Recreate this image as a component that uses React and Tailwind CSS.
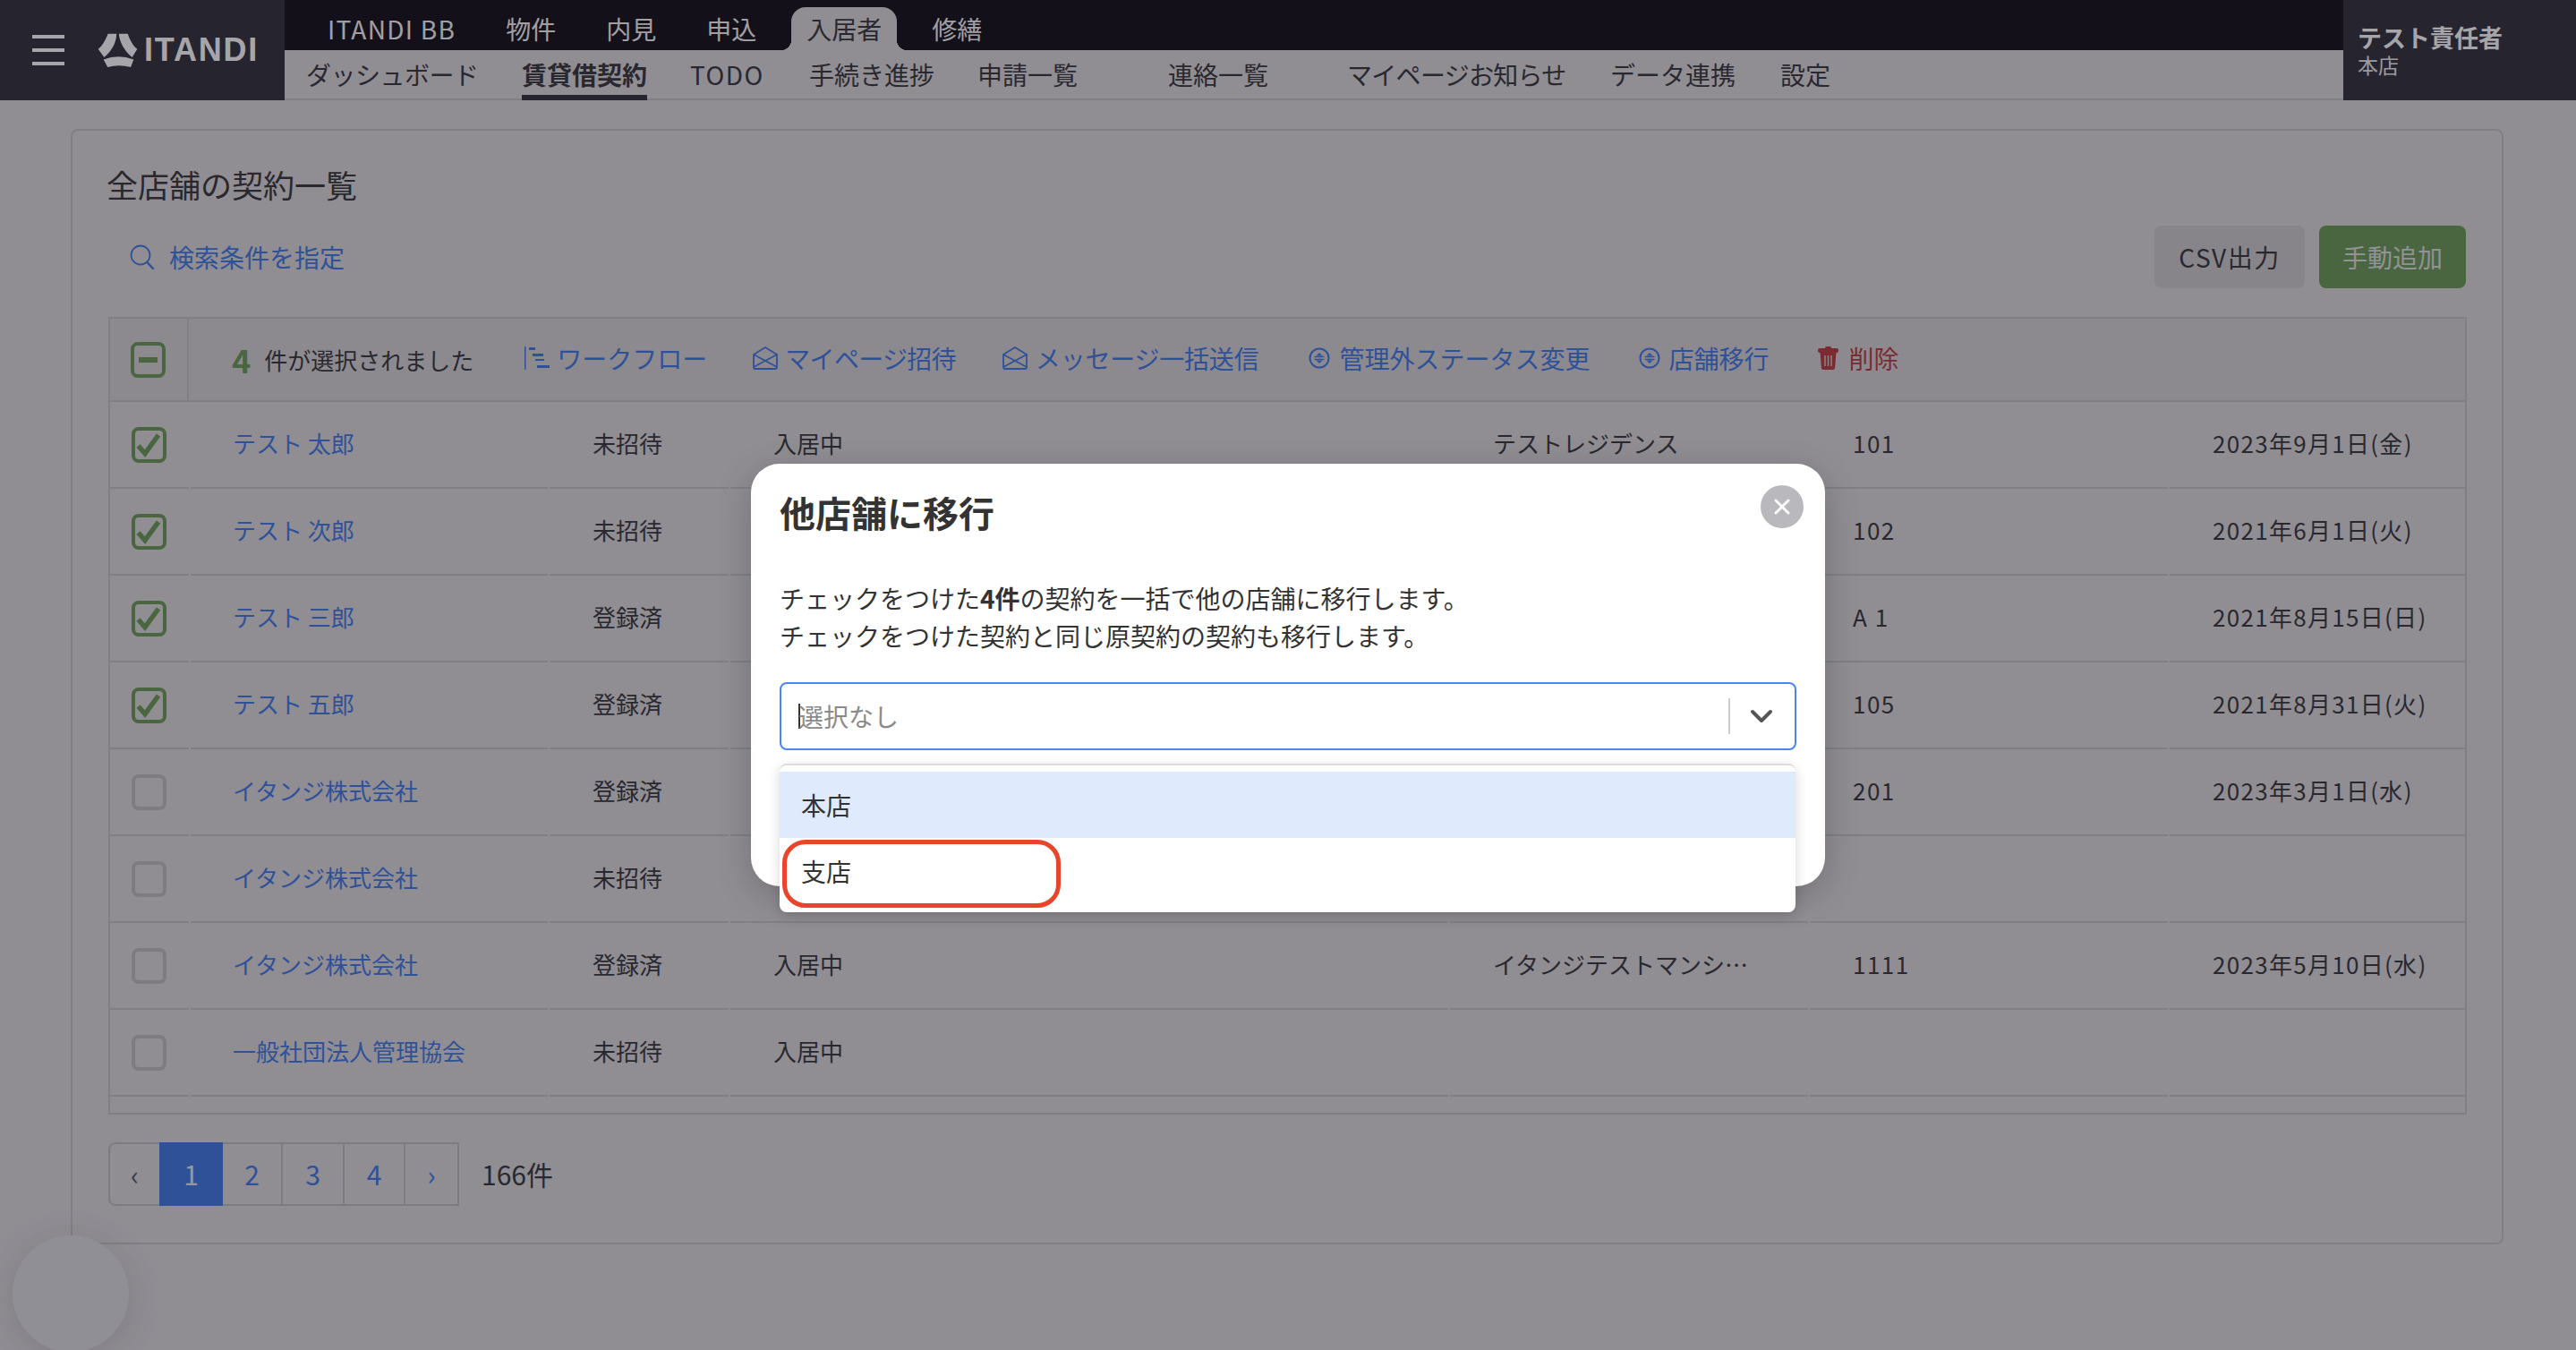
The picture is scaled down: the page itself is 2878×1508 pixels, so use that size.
import { ChevronDown, X } from 'lucide-react';

const mainTabs = ['ITANDI BB', '物件', '内見', '申込', '入居者', '修繕'];

const subTabs = [
    { label: 'ダッシュボード', width: 'w-[241px]', text: 'tracking-[-0.5px]' },
    { label: '賃貸借契約', width: 'w-[188px]', active: true },
    { label: 'TODO', width: 'w-[133px]', text: 'tracking-[1.5px]' },
    { label: '手続き進捗', width: 'w-[188px]' },
    { label: '申請一覧', width: 'w-[213px]' },
    { label: '連絡一覧', width: 'w-[200px]' },
    { label: 'マイページお知らせ', width: 'w-[294px]', text: 'tracking-[-0.7px]' },
    { label: 'データ連携', width: 'w-[190px]' },
    { label: '設定', width: 'w-[120px]' },
];

const rows = [
    { name: 'テスト 太郎', invite: '未招待', status: '入居中', property: 'テストレジデンス', room: '101', date: '2023年9月1日(金)', checked: true },
    { name: 'テスト 次郎', invite: '未招待', room: '102', date: '2021年6月1日(火)', checked: true },
    { name: 'テスト 三郎', invite: '登録済', room: 'A 1', date: '2021年8月15日(日)', checked: true },
    { name: 'テスト 五郎', invite: '登録済', room: '105', date: '2021年8月31日(火)', checked: true },
    { name: 'イタンジ株式会社', invite: '登録済', room: '201', date: '2023年3月1日(水)' },
    { name: 'イタンジ株式会社', invite: '未招待' },
    { name: 'イタンジ株式会社', invite: '登録済', status: '入居中', property: 'イタンジテストマンシ…', room: '1111', date: '2023年5月10日(水)' },
    { name: '一般社団法人管理協会', invite: '未招待', status: '入居中' },
];

const LogoMark = () => (
    <svg width="45" height="39" viewBox="28 18 136 118" fill="#ffffff">
        <path d="M63 20 L92 20 C92 45 80 75 50 100 L30 72 C45 60 55 40 63 20 Z" />
        <path d="M100 20 L130 20 C137 40 147 60 162 72 L145 100 C115 75 102 45 100 20 Z" />
        <path d="M48 107 Q98 88 150 107 L140 133 Q100 122 62 133 Z" />
    </svg>
);

const SearchIcon = () => (
    <svg width="28" height="28" viewBox="0 0 28 28" fill="none" stroke="#4078e4" strokeWidth="1.8" strokeLinecap="round">
        <circle cx="12" cy="12" r="10.5" />
        <path d="M19.5 20 L26 27" strokeWidth="2.4" />
    </svg>
);

const FlowIcon = () => (
    <svg width="28" height="26" viewBox="0 0 28 26" fill="#4078e4">
        <rect x="0" y="0" width="1.5" height="26" />
        <rect x="5" y="1" width="7" height="3" />
        <rect x="9" y="8" width="12" height="3" />
        <rect x="12" y="14" width="10" height="2" />
        <rect x="14" y="21" width="14" height="3" />
    </svg>
);

const MailIcon = () => (
    <svg width="28" height="26" viewBox="0 0 28 26" fill="none" stroke="#4078e4" strokeWidth="1.8" strokeLinejoin="round">
        <path d="M1 9 L14 1 L27 9 V23 Q27 25 25 25 H3 Q1 25 1 23 Z" />
        <path d="M1 9 L27 23 M27 9 L1 23" />
    </svg>
);

const SwapIcon = () => (
    <svg width="24" height="24" viewBox="0 0 24 24" fill="none" stroke="#4078e4" strokeWidth="2">
        <circle cx="12" cy="12" r="10.5" />
        <path d="M6.5 10.5 H17.5 M6.5 13.5 H17.5" strokeWidth="1.4" />
        <path d="M12 6 L15.5 9.5 H8.5 Z M12 18 L15.5 14.5 H8.5 Z" fill="#4078e4" stroke="none" />
    </svg>
);

const TrashIcon = () => (
    <svg width="23" height="26" viewBox="0 0 23 26" fill="#b83a40">
        <rect x="8" y="0" width="7" height="3" rx="1.5" />
        <rect x="0" y="2" width="23" height="5" rx="2" />
        <path d="M2.5 7 H20.5 L19 24 Q19 26 17 26 H6 Q4 26 4 24 Z" />
        <path d="M8 10 V22 M11.5 10 V22 M15 10 V22" stroke="#d6d4d6" strokeWidth="1.4" />
    </svg>
);

const Checkbox = ({ state }) => (
    <div
        className={`w-[39px] h-[40px] rounded-[8px] border-[4px] flex items-center justify-center ${
            state ? 'border-[#6a9a57]' : 'border-[#bdbdbf]'
        }`}
    >
        {state === 'checked' && (
            <svg width="31" height="32" viewBox="0 0 31 32" fill="none" stroke="#6a9a57" strokeWidth="5.5">
                <path d="M3.5 17 L11 25.5 L26 5" />
            </svg>
        )}
        {state === 'partial' && <div className="w-[21px] h-[6px] bg-[#6a9a57]" />}
    </div>
);

const Action = ({ icon, label, red, className = '' }) => (
    <div className={`flex items-center pb-[3px] text-[28px] leading-[40px] whitespace-nowrap ${red ? 'text-[#b83a40]' : 'text-[#4078e4]'} ${className}`}>
        {icon}
        <span>{label}</span>
    </div>
);

const Cell = ({ children, className = '' }) => (
    <div className={`h-[97px] border-b-2 border-[#c2c2c4] flex items-center whitespace-nowrap ${className}`}>
        {children}
    </div>
);

const TextCell = ({ children, className = '' }) => (
    <Cell className={`pl-[48px] pb-[4px] ${className}`}>{children}</Cell>
);

const App = () => {
    return (
        <div className="relative w-[2878px] h-[1508px] overflow-hidden bg-[#dbd9dc] text-[#38363b] [font-family:'Noto_Sans_CJK_JP',sans-serif]">
            {/* Header */}
            <header className="flex h-[112px]">
                <div className="w-[318px] bg-[#312f3b] flex items-center pl-[36px]">
                    <div className="w-[36px] h-[34px] flex flex-col justify-between">
                        <div className="h-[4px] bg-white" />
                        <div className="h-[4px] bg-white" />
                        <div className="h-[4px] bg-white" />
                    </div>
                    <div className="ml-[37px]">
                        <LogoMark />
                    </div>
                    <span className="ml-[7px] text-white font-bold text-[36px] leading-none tracking-[1.8px] [font-family:'Liberation_Sans',sans-serif]">
                        ITANDI
                    </span>
                </div>

                <div className="flex-1 flex flex-col">
                    <nav className="h-[56px] bg-[#121018] flex items-end pl-[31px] gap-[22px]">
                        {mainTabs.map((tab) =>
                            tab === '入居者' ? (
                                <div
                                    key={tab}
                                    className="relative h-[48px] px-[17px] flex items-center text-[28px] bg-[#dbd9dc] text-[#38363b] rounded-t-[16px] before:absolute before:bottom-0 before:-left-[12px] before:w-[12px] before:h-[12px] before:bg-[radial-gradient(circle_at_0_0,#121018_12px,#dbd9dc_12.5px)] after:absolute after:bottom-0 after:-right-[12px] after:w-[12px] after:h-[12px] after:bg-[radial-gradient(circle_at_100%_0,#121018_12px,#dbd9dc_12.5px)]"
                                >
                                    {tab}
                                </div>
                            ) : (
                                <div
                                    key={tab}
                                    className={`h-[48px] px-[17px] flex items-center text-[28px] text-[#f5f5f5] ${
                                        tab === 'ITANDI BB' ? 'tracking-[1.3px]' : ''
                                    }`}
                                >
                                    {tab}
                                </div>
                            )
                        )}
                    </nav>
                    <nav className="h-[56px] flex shadow-[inset_0_-2px_0_#c2c2c4]">
                        {subTabs.map((tab) => (
                            <div key={tab.label} className={`pl-[24px] ${tab.width}`}>
                                <div
                                    className={`w-fit h-[56px] pt-[4px] border-b-[6px] flex items-center text-[28px] whitespace-nowrap ${
                                        tab.active ? 'font-bold border-[#312f3b]' : 'border-transparent'
                                    } ${tab.text || ''}`}
                                >
                                    {tab.label}
                                </div>
                            </div>
                        ))}
                    </nav>
                </div>

                <div className="w-[260px] bg-[#312f3b] pl-[16px] pt-[26px] text-white">
                    <div className="text-[27px] leading-[32px] font-bold">テスト責任者</div>
                    <div className="text-[23px] leading-[28px] text-[#eeeeee]">本店</div>
                </div>
            </header>

            {/* Contract list */}
            <main className="px-[79px] pt-[32px]">
                <section className="w-[2718px] h-[1246px] border-2 border-[#c2c2c4] rounded-[8px] px-[40px] pt-[35px]">
                    <h1 className="-ml-[2px] text-[35px] leading-[50px]">全店舗の契約一覧</h1>

                    <div className="mt-[21px] flex items-center justify-between h-[70px]">
                        <div className="flex items-center gap-[16px] pl-[24px] text-[28px] text-[#4078e4]">
                            <SearchIcon />
                            <span>検索条件を指定</span>
                        </div>
                        <div className="flex gap-[16px] text-[28px]">
                            <button className="w-[168px] h-[70px] rounded-[8px] bg-[#cdcccb] tracking-[1.5px]">CSV出力</button>
                            <button className="w-[164px] h-[70px] rounded-[8px] bg-[#6a9a57] text-[#dfdfdf]">手動追加</button>
                        </div>
                    </div>

                    {/* Table */}
                    <div className="mt-[32px] w-[2635px] border-2 border-[#c2c2c4] text-[26px] pb-[18px]">
                        <div className="h-[93px] flex items-center bg-[#d6d4d6] border-b-2 border-[#c2c2c4]">
                            <div className="w-[88px] h-full pr-[2px] flex items-center justify-center border-r-2 border-[#c2c2c4] shrink-0">
                                <Checkbox state="partial" />
                            </div>
                            <div className="pl-[48px] flex items-center">
                                <span className="pb-[2px] text-[36px] font-bold leading-none text-[#6a9a57]">4</span>
                                <span className="ml-[15px]">件が選択されました</span>
                            </div>
                            <Action className="ml-[57px] gap-[8px]" icon={<FlowIcon />} label="ワークフロー" />
                            <Action className="ml-[51px] gap-[8px]" icon={<MailIcon />} label={<span className="tracking-[-0.7px]">マイページ招待</span>} />
                            <Action className="ml-[52px] gap-[9px]" icon={<MailIcon />} label={<span className="tracking-[-0.2px]">メッセージ一括送信</span>} />
                            <Action className="ml-[56px] gap-[10px]" icon={<SwapIcon />} label="管理外ステータス変更" />
                            <Action className="ml-[54px] gap-[10px]" icon={<SwapIcon />} label="店舗移行" />
                            <Action className="ml-[54px] gap-[12px]" icon={<TrashIcon />} label="削除" red />
                        </div>

                        <div className="grid grid-cols-[88px_399px_200px_802px_400px_400px_1fr] gap-x-[2px]">
                            {rows.map((row, i) => (
                                <div key={i} className="contents">
                                    <Cell className="pr-[2px] justify-center">
                                        <Checkbox state={row.checked ? 'checked' : null} />
                                    </Cell>
                                    <TextCell className="!pl-[47px] text-[#4078e4]">{row.name}</TextCell>
                                    <TextCell>{row.invite}</TextCell>
                                    <TextCell>{row.status}</TextCell>
                                    <TextCell>{row.property}</TextCell>
                                    <TextCell className="tracking-[1.5px]">{row.room}</TextCell>
                                    <TextCell className="tracking-[1.3px]">{row.date}</TextCell>
                                </div>
                            ))}
                        </div>
                    </div>

                    {/* Pagination */}
                    <div className="mt-[31px] flex items-center">
                        <div className="h-[71px] flex border-2 border-[#bdbdbf] rounded-l-[8px] text-[30px] text-[#4078e4]">
                            <div className="w-[55px] flex items-center justify-center text-[#55535a]">‹</div>
                            <div className="w-[71px] -my-[2px] bg-[#4078e4] text-[#e8e8e8] flex items-center justify-center">1</div>
                            <div className="w-[67px] flex items-center justify-center border-r-2 border-[#bdbdbf]">2</div>
                            <div className="w-[69px] flex items-center justify-center border-r-2 border-[#bdbdbf]">3</div>
                            <div className="w-[68px] flex items-center justify-center border-r-2 border-[#bdbdbf]">4</div>
                            <div className="w-[58px] flex items-center justify-center">›</div>
                        </div>
                        <span className="ml-[25px] text-[30px]">166件</span>
                    </div>
                </section>
            </main>

            {/* Floating bubble */}
            <div className="absolute left-[14px] top-[1380px] w-[130px] h-[130px] rounded-full bg-[#dedce0] shadow-[0_6px_40px_rgba(0,0,0,0.12)]" />

            {/* Modal */}
            <div className="absolute inset-0 bg-[#14121e]/38 flex items-center justify-center">
                <div className="relative w-[1200px] h-[472px] bg-white rounded-[32px] px-[32px] pt-[34px] text-[#333333] shadow-[0_10px_40px_rgba(0,0,0,0.2)]">
                    <button className="absolute top-[24px] right-[24px] w-[48px] h-[48px] rounded-full bg-[#b9b8bc] flex items-center justify-center text-white">
                        <X size={28} strokeWidth={2.5} />
                    </button>

                    <h2 className="text-[40px] leading-[40px] font-bold">他店舗に移行</h2>

                    <p className="mt-[55px] text-[28px] leading-[42px]">
                        チェックをつけた<span className="font-bold">4件</span>の契約を一括で他の店舗に移行します。
                        <br />
                        チェックをつけた契約と同じ原契約の契約も移行します。
                    </p>

                    <div className="mt-[31px] h-[76px] border-2 border-[#4a86ee] rounded-[8px] flex items-center pl-[19px] pr-[17px]">
                        <span className="w-[2px] h-[28px] bg-[#333333] -mr-[2px]" />
                        <span className="text-[28px] text-[#8a8a8a]">選択なし</span>
                        <div className="ml-auto h-[40px] w-[2px] bg-[#cccccc]" />
                        <ChevronDown className="ml-[15px] text-[#555555]" size={40} strokeWidth={2.4} />
                    </div>

                    {/* Dropdown menu */}
                    <div className="absolute left-[32px] top-[335px] w-[1135px] h-[166px] bg-white rounded-[8px] border-t-2 border-[#dddddd] pt-[7px] pb-[8px] text-[28px] shadow-[0_4px_14px_rgba(0,0,0,0.16)]">
                        <div className="h-[74px] bg-[#dfeafc] flex items-center pl-[24px]">本店</div>
                        <div className="h-[74px] flex items-center pl-[24px]">支店</div>
                    </div>

                    {/* Red callout */}
                    <div className="absolute left-[35px] top-[420px] w-[311px] h-[76px] rounded-[26px] border-[5px] border-[#e8452a]" />
                </div>
            </div>
        </div>
    );
};

export default App;
